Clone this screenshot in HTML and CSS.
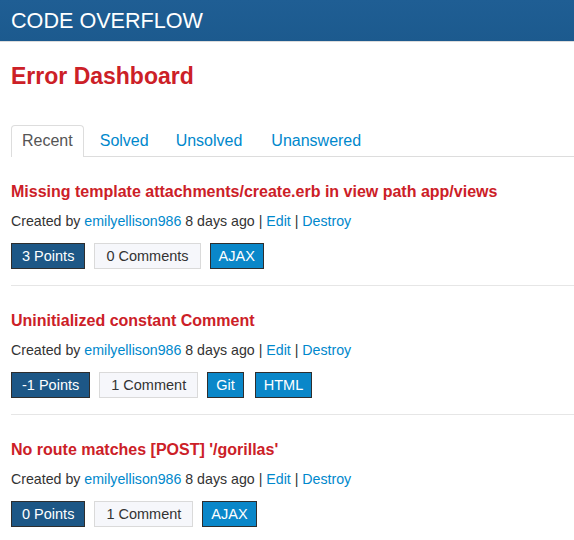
FILE: index.html
```html
<!DOCTYPE html>
<html>
<head>
<meta charset="utf-8">
<title>Code Overflow</title>
<link rel="stylesheet" href="styles.css">
</head>
<body>
<header class="topbar">
  <span class="brand">CODE OVERFLOW</span>
</header>
<main class="page">
  <h1 class="page-title">Error Dashboard</h1>
  <ul class="tabs">
    <li class="tab active">Recent</li>
    <li class="tab"><a href="#">Solved</a></li>
    <li class="tab"><a href="#">Unsolved</a></li>
    <li class="tab"><a href="#">Unanswered</a></li>
  </ul>

  <section class="item">
    <h2 class="item-title">Missing template attachments/create.erb in view path app/views</h2>
    <p class="meta">Created by <a href="#">emilyellison986</a> 8 days ago | <a href="#">Edit</a> | <a href="#">Destroy</a></p>
    <div class="badges">
      <span class="badge points">3 Points</span>
      <span class="badge comments">0 Comments</span>
      <span class="badge tag">AJAX</span>
    </div>
  </section>

  <section class="item">
    <h2 class="item-title">Uninitialized constant Comment</h2>
    <p class="meta">Created by <a href="#">emilyellison986</a> 8 days ago | <a href="#">Edit</a> | <a href="#">Destroy</a></p>
    <div class="badges">
      <span class="badge points">-1 Points</span>
      <span class="badge comments">1 Comment</span>
      <span class="badge tag">Git</span>
      <span class="badge tag">HTML</span>
    </div>
  </section>

  <section class="item">
    <h2 class="item-title">No route matches [POST] '/gorillas'</h2>
    <p class="meta">Created by <a href="#">emilyellison986</a> 8 days ago | <a href="#">Edit</a> | <a href="#">Destroy</a></p>
    <div class="badges">
      <span class="badge points">0 Points</span>
      <span class="badge comments">1 Comment</span>
      <span class="badge tag">AJAX</span>
    </div>
  </section>
</main>
</body>
</html>
```
FILE: styles.css
```css
* { box-sizing: border-box; }
html, body {
  margin: 0;
  padding: 0;
  background: #fff;
  font-family: "Liberation Sans", Arial, Helvetica, sans-serif;
  color: #333;
  overflow: hidden;
}
a { color: #0088cc; text-decoration: none; }

.topbar {
  height: 42px;
  background: #1e5c91;
  background-image: linear-gradient(180deg, #1f5e94 0%, #1c5a8e 100%);
  border-bottom: 1px solid #dcdcdc;
  padding-left: 11px;
  display: flex;
  align-items: center;
}
.brand {
  color: #fff;
  font-size: 21.6px;
  line-height: 26px;
  padding-top: 1px;
}

.page {
  padding-left: 11px;
}
.page-title {
  margin: 20px 0 35px;
  font-size: 23px;
  line-height: 28px;
  font-weight: bold;
  color: #cc2027;
}

.tabs {
  list-style: none;
  margin: 0;
  padding: 0;
  display: flex;
  border-bottom: 1px solid #dddddd;
}
.tab {
  font-size: 16px;
  line-height: 20px;
  padding: 5px 10px;
  margin-right: 5px;
  border: 1px solid transparent;
  border-bottom: none;
}
.tab:nth-child(3) { margin-right: 7px; }
.tab.active {
  border-color: #dddddd;
  border-radius: 4px 4px 0 0;
  background: #fff;
  color: #555;
  margin-bottom: -1px;
  padding-bottom: 6px;
}

.item {
  padding: 25px 0 16px;
  border-bottom: 1px solid #e6e6e6;
}
.item:last-child { border-bottom: none; }
.item-title {
  margin: 0 0 9px;
  font-size: 16px;
  line-height: 20px;
  font-weight: bold;
  color: #cc2027;
}
.meta {
  margin: 0 0 12px;
  font-size: 14.2px;
  line-height: 20px;
  color: #333;
}
.badges {
  display: flex;
  gap: 9px;
}
.badge {
  font-size: 14.5px;
  line-height: 20px;
  padding: 2px 10px;
  border: 1px solid #2e2e2e;
  white-space: nowrap;
}
.badge.points {
  background: #1d5786;
  color: #fff;
}
.badge.comments {
  background: #f6f7fb;
  border-color: #dadada;
  color: #333;
  padding: 2px 11px;
}
.badge.tag {
  background: #0a87c9;
  color: #fff;
  padding: 2px 8px;
}
.badge.tag + .badge.tag { margin-left: 2px; }
```
